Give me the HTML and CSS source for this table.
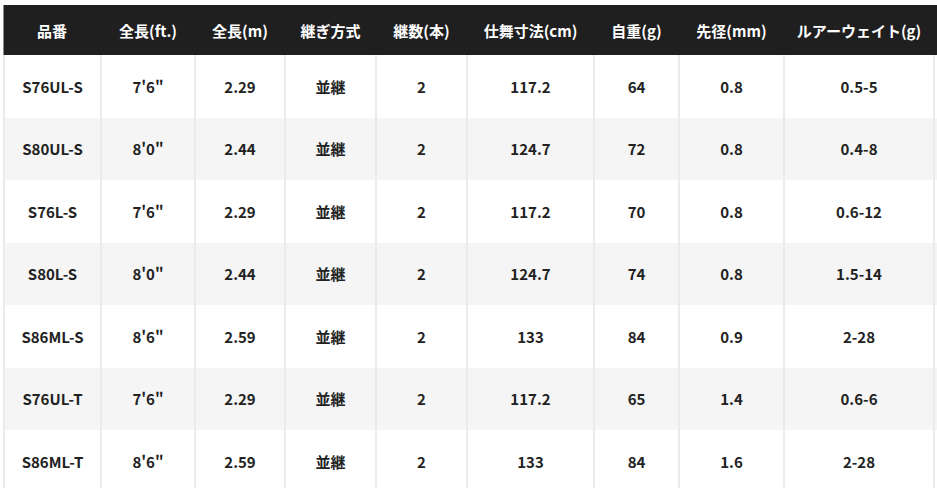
FILE: index.html
```html
<!DOCTYPE html>
<html lang="ja">
<head>
<meta charset="utf-8">
<link rel="stylesheet" href="styles.css">
</head>
<body>
<div class="spec">
  <div class="row head">
    <div class="cell">品番</div>
    <div class="cell">全長(ft.)</div>
    <div class="cell">全長(m)</div>
    <div class="cell">継ぎ方式</div>
    <div class="cell">継数(本)</div>
    <div class="cell">仕舞寸法(cm)</div>
    <div class="cell">自重(g)</div>
    <div class="cell">先径(mm)</div>
    <div class="cell">ルアーウェイト(g)</div>
    <div class="cell"></div>
  </div>
  <div class="row">
    <div class="cell">S76UL-S</div><div class="cell">7'6"</div><div class="cell">2.29</div><div class="cell">並継</div><div class="cell">2</div><div class="cell">117.2</div><div class="cell">64</div><div class="cell">0.8</div><div class="cell">0.5-5</div><div class="cell"></div>
  </div>
  <div class="row alt">
    <div class="cell">S80UL-S</div><div class="cell">8'0"</div><div class="cell">2.44</div><div class="cell">並継</div><div class="cell">2</div><div class="cell">124.7</div><div class="cell">72</div><div class="cell">0.8</div><div class="cell">0.4-8</div><div class="cell"></div>
  </div>
  <div class="row">
    <div class="cell">S76L-S</div><div class="cell">7'6"</div><div class="cell">2.29</div><div class="cell">並継</div><div class="cell">2</div><div class="cell">117.2</div><div class="cell">70</div><div class="cell">0.8</div><div class="cell">0.6-12</div><div class="cell"></div>
  </div>
  <div class="row alt">
    <div class="cell">S80L-S</div><div class="cell">8'0"</div><div class="cell">2.44</div><div class="cell">並継</div><div class="cell">2</div><div class="cell">124.7</div><div class="cell">74</div><div class="cell">0.8</div><div class="cell">1.5-14</div><div class="cell"></div>
  </div>
  <div class="row">
    <div class="cell">S86ML-S</div><div class="cell">8'6"</div><div class="cell">2.59</div><div class="cell">並継</div><div class="cell">2</div><div class="cell">133</div><div class="cell">84</div><div class="cell">0.9</div><div class="cell">2-28</div><div class="cell"></div>
  </div>
  <div class="row alt">
    <div class="cell">S76UL-T</div><div class="cell">7'6"</div><div class="cell">2.29</div><div class="cell">並継</div><div class="cell">2</div><div class="cell">117.2</div><div class="cell">65</div><div class="cell">1.4</div><div class="cell">0.6-6</div><div class="cell"></div>
  </div>
  <div class="row">
    <div class="cell">S86ML-T</div><div class="cell">8'6"</div><div class="cell">2.59</div><div class="cell">並継</div><div class="cell">2</div><div class="cell">133</div><div class="cell">84</div><div class="cell">1.6</div><div class="cell">2-28</div><div class="cell"></div>
  </div>
</div>
</body>
</html>
```
FILE: styles.css
```css
html, body {
  margin: 0;
  padding: 0;
  background: #fff;
  overflow: hidden;
}
body {
  padding: 5px 0 0 3px;
  font-family: "Noto Sans CJK JP", "Noto Sans", sans-serif;
  font-weight: 700;
  font-size: 15px;
  color: #222;
}
.spec {
  width: 934px;
}
.row {
  display: grid;
  grid-template-columns: 97px 94px 90px 91px 91px 127px 85px 105px 150px 4px;
  height: 62.5px;
  background: #fff;
}
.row.alt {
  background: #f5f5f5;
}
.row.head {
  height: 50px;
  background: #1f1f1f;
  color: #fff;
}
.cell {
  display: flex;
  align-items: center;
  justify-content: center;
  border-left: 2px solid #ebebeb;
  white-space: nowrap;
  line-height: 1;
}
.head .cell {
  border-left-color: #1f1f1f;
}
.head .cell:first-child {
  border-left: 1px solid #8a8a8a;
}
```
